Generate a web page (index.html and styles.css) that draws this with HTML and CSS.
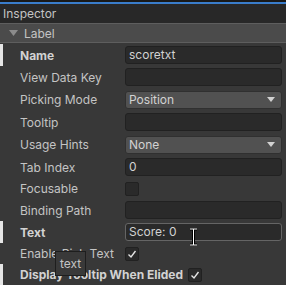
FILE: index.html
```html
<!DOCTYPE html>
<html lang="en">
<head>
  <meta charset="UTF-8">
  <meta name="viewport" content="width=device-width, initial-scale=1.0">
  <link rel="stylesheet" href="styles.css">
</head>
<body>

<div class="window">
  <div class="top-strip"></div>
  <div class="tab-header">Inspector</div>

  <div class="foldout">
    <svg class="fold-arrow" width="9" height="6" viewBox="0 0 9 6"><polygon points="0,0 9,0 4.5,6" fill="#8c8c8c"/></svg>
    <span>Label</span>
  </div>

  <div class="fields">
    <div class="row set">
      <span class="label bold">Name</span>
      <div class="input">scoretxt</div>
    </div>
    <div class="row">
      <span class="label">View Data Key</span>
      <div class="input"></div>
    </div>
    <div class="row drop-row">
      <span class="label">Picking Mode</span>
      <div class="dropdown">
        <span>Position</span>
        <svg width="8" height="5" viewBox="0 0 8 5"><polygon points="0,0 8,0 4,5" fill="#d2d2d2"/></svg>
      </div>
    </div>
    <div class="row">
      <span class="label">Tooltip</span>
      <div class="input"></div>
    </div>
    <div class="row drop-row">
      <span class="label">Usage Hints</span>
      <div class="dropdown">
        <span>None</span>
        <svg width="8" height="5" viewBox="0 0 8 5"><polygon points="0,0 8,0 4,5" fill="#d2d2d2"/></svg>
      </div>
    </div>
    <div class="row">
      <span class="label">Tab Index</span>
      <div class="input">0</div>
    </div>
    <div class="row toggle-row">
      <span class="label">Focusable</span>
      <div class="checkbox"></div>
    </div>
    <div class="row">
      <span class="label">Binding Path</span>
      <div class="input"></div>
    </div>
    <div class="row set">
      <span class="label bold">Text</span>
      <div class="input hover">Score: 0</div>
    </div>
    <div class="row toggle-row">
      <span class="label">Enable Rich Text</span>
      <div class="checkbox">
        <svg width="14" height="14" viewBox="0 0 14 14"><polyline points="3.5,7.5 6,10 10.5,4" fill="none" stroke="#e4e4e4" stroke-width="1.4"/></svg>
      </div>
    </div>
    <div class="row toggle-row set">
      <span class="label bold auto">Display Tooltip When Elided</span>
      <div class="checkbox">
        <svg width="14" height="14" viewBox="0 0 14 14"><polyline points="3.5,7.5 6,10 10.5,4" fill="none" stroke="#e4e4e4" stroke-width="1.4"/></svg>
      </div>
    </div>
  </div>

  <!-- hover tooltip and text cursor sit over the fields -->
  <div class="tooltip">text</div>
  <svg class="ibeam" width="9" height="18" viewBox="0 0 9 18">
    <path d="M1,1 H8 M4.5,1 V17 M1,17 H8" stroke="#000" stroke-width="3" fill="none"/>
    <path d="M1,1 H8 M4.5,1 V17 M1,17 H8" stroke="#fff" stroke-width="1" fill="none"/>
  </svg>
</div>

</body>
</html>
```

FILE: styles.css
```css
body {
  margin: 0;
  font-family: Inter, "Noto Sans", sans-serif;
  font-size: 12px;
  background: #383838;
  color: #c4c4c4;
  overflow: hidden;
}

.window {
  position: relative;
  width: 286px;
  height: 285px;
  overflow: hidden;
}

.top-strip {
  height: 2px;
  background: #191919;
  border-bottom: 2px solid #3a7dcb;
}

.tab-header {
  height: 19px;
  line-height: 19px;
  padding-left: 3px;
  background: #282828;
  color: #c4c4c4;
}

.foldout {
  display: flex;
  align-items: center;
  height: 18px;
  padding-left: 9px;
  background: #4b4b4b;
  border-top: 1px solid #5e5e5e;
  border-bottom: 1px solid #5e5e5e;
}

.fold-arrow {
  margin-right: 6px;
}

.fields {
  padding-top: 1px;
}

.row {
  display: flex;
  align-items: center;
  height: 22px;
  padding-left: 20px;
}

.row.set {
  box-shadow: inset 3px 0 #e6e6e6;
}

.drop-row {
  height: 23px;
}

.toggle-row {
  height: 21px;
}

.label {
  width: 105px;
  flex-shrink: 0;
  white-space: nowrap;
}

.label.bold {
  font-weight: bold;
  color: #d2d2d2;
}

.label.auto {
  width: auto;
  margin-right: 5px;
}

.input,
.dropdown {
  box-sizing: border-box;
  width: 157px;
  height: 18px;
  line-height: 16px;
  padding-left: 3px;
  border-radius: 3px;
  color: #d2d2d2;
}

.input {
  background: #2a2a2a;
  border: 1px solid #212121;
}

.input.hover {
  border-color: #656565;
}

.dropdown {
  display: flex;
  justify-content: space-between;
  align-items: center;
  padding-right: 6px;
  background: #515151;
  border: 1px solid #303030;
}

.checkbox {
  box-sizing: border-box;
  width: 14px;
  height: 14px;
  background: #2a2a2a;
  border: 1px solid #212121;
  border-radius: 2px;
}

.checkbox svg {
  display: block;
  margin: -1px;
}

.tooltip {
  position: absolute;
  left: 55px;
  top: 251px;
  box-sizing: border-box;
  width: 31px;
  height: 25px;
  padding-top: 4px;
  text-align: center;
  background: #393939;
  border: 1px solid #1e1e1e;
  color: #c4c4c4;
}

.ibeam {
  position: absolute;
  left: 189px;
  top: 228px;
}
```
